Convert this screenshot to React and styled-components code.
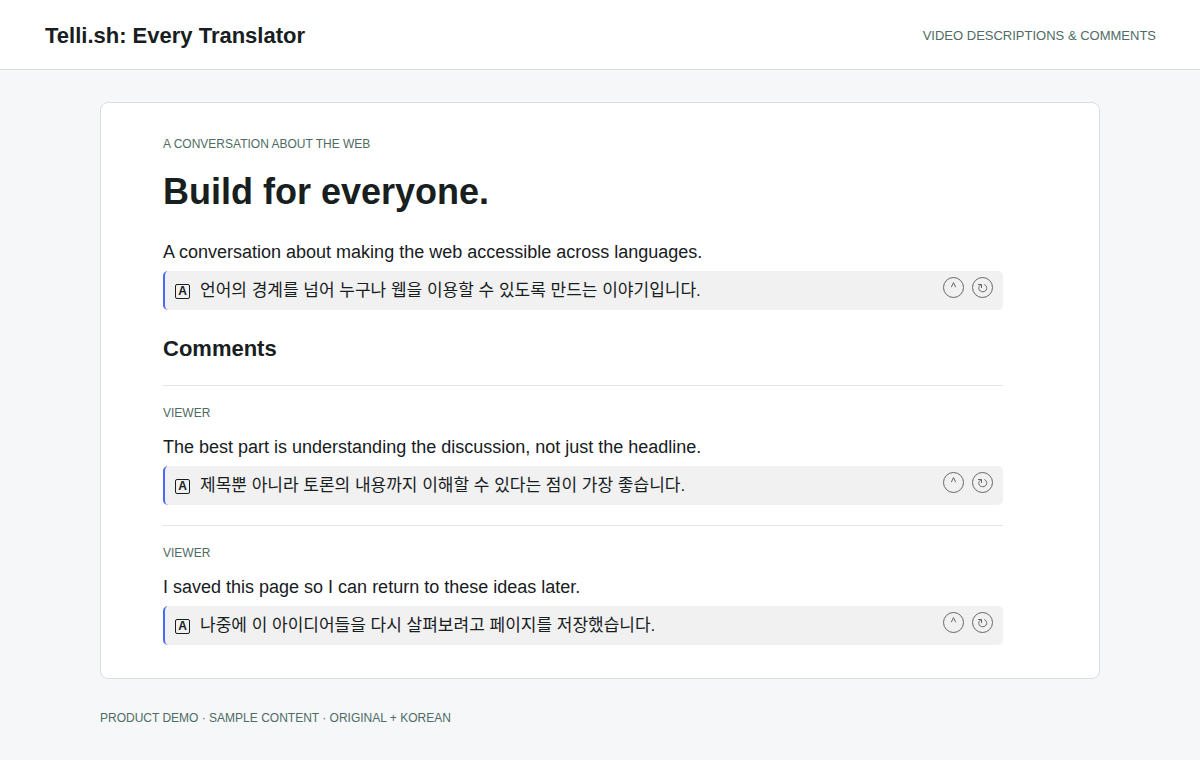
import React from "react";
import styled, { createGlobalStyle } from "styled-components";

const GlobalStyle = createGlobalStyle`
  * { box-sizing: border-box; }
  body {
    margin: 0;
    background: #f5f7f9;
    color: #17201e;
    font-family: "Liberation Sans", Arial, "Noto Sans CJK KR", sans-serif;
  }
  h1, h2, p { margin: 0; }
`;

const Header = styled.header`
  display: flex;
  align-items: center;
  justify-content: space-between;
  min-height: 70px;
  padding: 3px 44px 0 45px;
  background: #fff;
  border-bottom: 1px solid #d9dfde;
`;

const Brand = styled.strong`
  font-size: 22px;
  line-height: 26px;
`;

const Label = styled.p`
  color: #4e6b64;
  font-size: ${({ $large }) => ($large ? 13 : 12)}px;
  line-height: 14px;
  text-transform: uppercase;
`;

const Main = styled.main`
  max-width: 1000px;
  margin: 32px auto 0;
`;

const Card = styled.article`
  padding: 34px 96px 33px 62px;
  background: #fff;
  border: 1px solid #d9dfde;
  border-radius: 8px;
`;

const Title = styled.h1`
  margin-top: 20px;
  font-size: 36px;
  line-height: 42px;
`;

const Heading = styled.h2`
  margin: 26px 0 23px;
  font-size: 22px;
  line-height: 26px;
`;

const Text = styled.p`
  margin-top: ${({ $gap }) => $gap}px;
  font-size: 18px;
  line-height: 28px;
`;

const Comment = styled.section`
  padding-top: 20px;
  border-top: 1px solid #e1e5e4;
  & + & { margin-top: 20px; }
`;

const TranslationRow = styled.div`
  display: flex;
  align-items: flex-start;
  margin-top: 5px;
  padding: 6px 10px 5px;
  background: #f1f1f1;
  border-left: 2px solid #4967fa;
  border-radius: 5px;
`;

const Badge = styled.span`
  flex: none;
  width: 15px;
  height: 15px;
  margin: 7px 10px 0 0;
  border: 1px solid #17201e;
  border-radius: 2px;
  font-size: 12px;
  font-weight: 700;
  line-height: 12px;
  text-align: center;
`;

const Translated = styled.p`
  flex: 1;
  font-size: 17px;
  line-height: 28px;
`;

const RoundButton = styled.button`
  display: grid;
  place-items: center;
  width: 21px;
  height: 21px;
  margin-left: 8px;
  padding: 0;
  background: transparent;
  border: 1px solid #666;
  border-radius: 50%;
  color: #666;
`;

const Glyph = styled.svg`
  width: 19px;
  height: 19px;
`;

const Footer = styled.footer`
  padding: 32px 0;
`;

function Translation({ children }) {
  return (
    <TranslationRow>
      <Badge>A</Badge>
      <Translated lang="ko">{children}</Translated>
      <RoundButton type="button" aria-label="Collapse translation">
        <Glyph viewBox="0 0 19 19" fill="none" stroke="currentColor" aria-hidden="true">
          <path d="M7.3 9.2 9.5 4.6l2.2 4.6" />
        </Glyph>
      </RoundButton>
      <RoundButton type="button" aria-label="Translate again">
        <Glyph viewBox="0 0 19 19" fill="none" stroke="currentColor" aria-hidden="true">
          <path d="M5 6.5h3.5V10M8.4 6.6C6.5 7.4 5.6 9 5.8 10.6c.7 4.2 7.2 4.2 7.9 0 .2-1.7-.7-3.4-2.4-4.1" />
        </Glyph>
      </RoundButton>
    </TranslationRow>
  );
}

const comments = [
  ["The best part is understanding the discussion, not just the headline.", "제목뿐 아니라 토론의 내용까지 이해할 수 있다는 점이 가장 좋습니다."],
  ["I saved this page so I can return to these ideas later.", "나중에 이 아이디어들을 다시 살펴보려고 페이지를 저장했습니다."],
];

export default function App() {
  return (
    <>
      <GlobalStyle />
      <Header>
        <Brand>Telli.sh: Every Translator</Brand>
        <Label $large>Video descriptions &amp; comments</Label>
      </Header>
      <Main>
        <Card>
          <Label>A conversation about the web</Label>
          <Title>Build for everyone.</Title>
          <Text $gap={25}>A conversation about making the web accessible across languages.</Text>
          <Translation>언어의 경계를 넘어 누구나 웹을 이용할 수 있도록 만드는 이야기입니다.</Translation>
          <Heading>Comments</Heading>
          {comments.map(([text, translation]) => (
            <Comment key={text}>
              <Label>Viewer</Label>
              <Text $gap={13}>{text}</Text>
              <Translation>{translation}</Translation>
            </Comment>
          ))}
        </Card>
        <Footer><Label>Product demo · Sample content · Original + Korean</Label></Footer>
      </Main>
    </>
  );
}
